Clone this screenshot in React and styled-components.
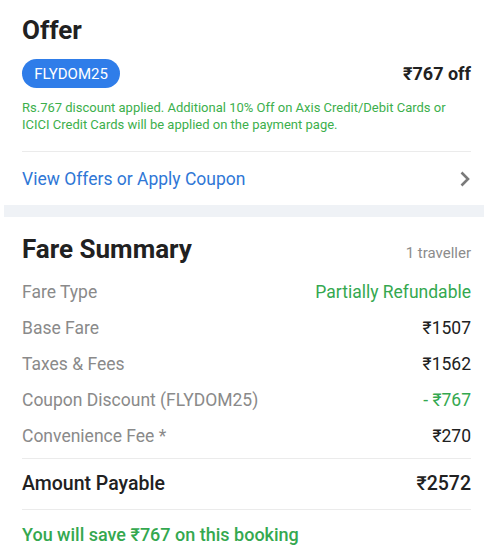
import styled, { createGlobalStyle } from 'styled-components'

const GlobalStyle = createGlobalStyle`
  body {
    margin: 0;
    background: #ffffff;
    font-family: Roboto, "Liberation Sans", Arial, sans-serif;
    color: #212121;
  }
`

const Page = styled.div`
  width: 485px;
  background: #ffffff;
`

const Section = styled.section`
  padding: ${(p) => p.$pad};
`

const Title = styled.h2`
  margin: 0;
  font-size: 26px;
  line-height: 30px;
  font-weight: 700;
  color: #212121;
`

const OfferRow = styled.div`
  display: flex;
  align-items: center;
  justify-content: space-between;
  margin-top: 14px;
`

const Chip = styled.span`
  display: inline-flex;
  align-items: center;
  justify-content: center;
  height: 29px;
  width: 98px;
  border-radius: 15px;
  background: #2f7de9;
  color: #ffffff;
  font-size: 15px;
`

const OffAmount = styled.span`
  font-size: 18px;
  font-weight: 700;
  color: #212121;
`

const Note = styled.p`
  margin: 12px 0 0;
  font-size: 13px;
  line-height: 16.5px;
  color: #3caf4c;
`

const Divider = styled.hr`
  margin: ${(p) => p.$margin || '0'};
  border: 0;
  border-top: 1px solid #ebebeb;
`

const LinkRow = styled.div`
  display: flex;
  align-items: center;
  justify-content: space-between;
  height: 53px;
`

const LinkText = styled.span`
  font-size: 17.5px;
  line-height: 20px;
  color: #2f77d6;
`

const Band = styled.div`
  height: 12px;
  margin: 0 1px 0 4px;
  background: #eff2f6;
`

const HeaderRow = styled.div`
  display: flex;
  align-items: baseline;
  justify-content: space-between;
  margin-bottom: 9.5px;
`

const Travellers = styled.span`
  font-size: 15px;
  color: #8c8c8c;
`

const Row = styled.div`
  display: flex;
  justify-content: space-between;
  height: 36px;
  line-height: 36px;
  font-size: 17.5px;
`

const Label = styled.span`
  color: #8a8a8a;
`

const Value = styled.span`
  color: ${(p) => (p.$green ? '#34a84f' : '#212121')};
`

const TotalRow = styled.div`
  display: flex;
  justify-content: space-between;
  height: 50px;
  line-height: 50px;
  font-size: 19.5px;
  font-weight: 500;
  color: #212121;
`

const Savings = styled.p`
  margin: 13px 0 0;
  font-size: 18px;
  line-height: 24px;
  font-weight: 500;
  color: #34a84f;
`

const Chevron = () => (
  <svg width="12" height="18" viewBox="0 0 12 18" fill="none">
    <path d="M2.5 2.5L9 9l-6.5 6.5" stroke="#7a7a7a" strokeWidth="2.6" />
  </svg>
)

const fares = [
  { label: 'Fare Type', value: 'Partially Refundable', green: true },
  { label: 'Base Fare', value: '₹1507' },
  { label: 'Taxes & Fees', value: '₹1562' },
  { label: 'Coupon Discount (FLYDOM25)', value: '- ₹767', green: true },
  { label: 'Convenience Fee *', value: '₹270' },
]

function App() {
  return (
    <Page>
      <GlobalStyle />
      <Section $pad="15px 14px 0 22px">
        <Title>Offer</Title>
        <OfferRow>
          <Chip>FLYDOM25</Chip>
          <OffAmount>₹767 off</OffAmount>
        </OfferRow>
        <Note>
          Rs.767 discount applied. Additional 10% Off on Axis Credit/Debit Cards or
          ICICI Credit Cards will be applied on the payment page.
        </Note>
        <Divider $margin="18px 0 0" />
        <LinkRow>
          <LinkText>View Offers or Apply Coupon</LinkText>
          <Chevron />
        </LinkRow>
      </Section>
      <Band />
      <Section $pad="17px 14px 20px 22px">
        <HeaderRow>
          <Title>Fare Summary</Title>
          <Travellers>1 traveller</Travellers>
        </HeaderRow>
        {fares.map((f) => (
          <Row key={f.label}>
            <Label>{f.label}</Label>
            <Value $green={f.green}>{f.value}</Value>
          </Row>
        ))}
        <Divider $margin="4.5px 0 0" />
        <TotalRow>
          <span>Amount Payable</span>
          <span>₹2572</span>
        </TotalRow>
        <Divider />
        <Savings>You will save ₹767 on this booking</Savings>
      </Section>
    </Page>
  )
}

export default App
